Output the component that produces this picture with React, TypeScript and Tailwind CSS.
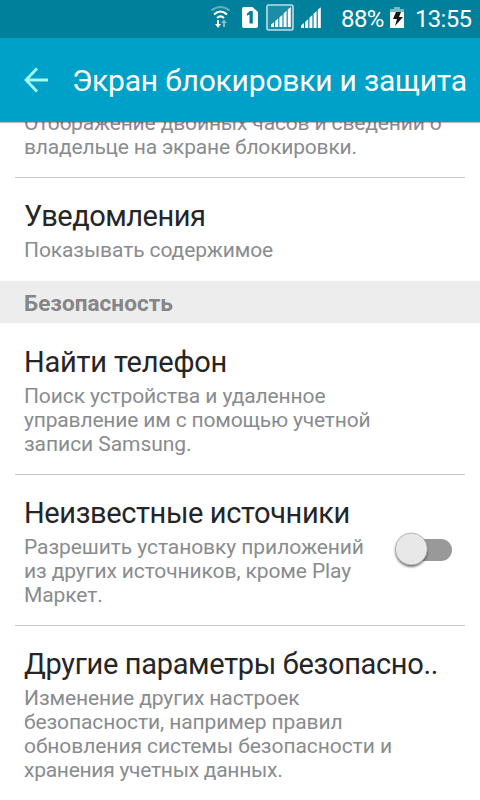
import React from "react";

type RowProps = {
  title: string;
  lines: string[];
  divider?: boolean;
  titleClass?: string;
  lineClasses?: string[];
  toggle?: boolean;
};

function Row({ title, lines, divider = true, titleClass = "", lineClasses = [], toggle = false }: RowProps) {
  return (
    <section className="relative px-[15px]">
      <div className={`h-px ${divider ? "bg-[#c9cacb]" : "bg-transparent"}`} />
      <div className="flex pt-[21px] pb-[18px] pl-[9px]">
        <div className="whitespace-nowrap">
          <h2 className={`h-[34px] text-[29px] leading-[34px] text-[#252525] ${titleClass}`}>{title}</h2>
          <div className="mt-[5px] text-[21px] leading-[24px] text-[#898c8e]">
            {lines.map((line, i) => (
              <p key={line} className={lineClasses[i] ?? "tracking-[-0.1px]"}>{line}</p>
            ))}
          </div>
        </div>
      </div>
      {toggle && (
        <button aria-label={title} className="absolute top-[57px] left-[390px] h-[40px] w-[68px]">
          <svg width="68" height="40" viewBox="0 0 68 40">
            <defs>
              <filter id="shade" x="-30%" y="-30%" width="160%" height="160%">
                <feDropShadow dx="0" dy="1.8" stdDeviation="1.1" floodColor="#000" floodOpacity="0.6" />
              </filter>
            </defs>
            <rect x="17" y="8" width="45" height="22" rx="11" fill="#999999" />
            <circle cx="21.3" cy="18" r="16" fill="#e8e8e8" filter="url(#shade)" />
            <circle cx="21.3" cy="18" r="16" fill="none" stroke="#8c8c8c" strokeWidth="0.6" />
          </svg>
        </button>
      )}
    </section>
  );
}

function StatusIcons() {
  return (
    <svg width="125" height="38" viewBox="0 0 125 38" className="shrink-0">
      <g fill="none" strokeWidth="2">
        <path d="M1.5 10.5Q10.5 3.5 19.5 10.5" stroke="#62b0c1" />
        <path d="M4 14.5Q10.5 8.5 17 14.5" stroke="#fff" />
        <path d="M7 18Q10.5 14.8 14 18" stroke="#fff" />
      </g>
      <path d="M7 20h2v4h2l-3 4-3-4h2z" fill="#fff" />
      <path d="M13 27h2v-4h2l-3-3.5-3 3.5h2z" fill="#7cbecb" />
      <path d="M34 7h8.5l5.5 5v14a2 2 0 0 1-2 2H34a2 2 0 0 1-2-2V9a2 2 0 0 1 2-2z" fill="#fff" />
      <path d="M37 13.5l3-2.5h2.8v12.5h-3.3V14.6L37 15.7z" fill="#00809a" />
      <rect x="57" y="5" width="26" height="25" rx="1.5" fill="#1c8da5" stroke="#b8e0e6" strokeWidth="1.6" />
      <g fill="#fff">
        <path d="M61 24.5l3-2.3V27h-3zM65.2 21l3-2.5V27h-3zM69.4 17.5l3-2.8V27h-3zM73.6 13.5l3-2.8V27h-3zM77.8 9.5l3-2.5v20h-3z" />
        <path d="M91 25.5l3-2.5v5h-3zM95.2 21.7l3-2.5V28h-3zM99.4 17.7l3-2.8V28h-3zM103.6 13.7l3-2.8V28h-3zM107.8 9.7l3-2.5V28h-3z" />
      </g>
    </svg>
  );
}

export default function App() {
  return (
    <main className="flex h-[800px] w-[480px] flex-col overflow-hidden bg-white font-['Roboto','Noto_Sans',sans-serif]">
      <div className="flex h-[38px] shrink-0 items-center bg-[#00809a] pl-[210px] text-[24px] leading-[38px] text-white">
        <StatusIcons />
        <span className="ml-[6px] w-[44px] whitespace-nowrap tracking-[-0.6px]">88%</span>
        <svg width="14" height="38" viewBox="0 0 14 38" className="ml-[5px] shrink-0">
          <path d="M4 7h6v2h4v4H0V9h4z" fill="#74bac8" />
          <path d="M0 12h14v16H0z" fill="#fff" />
          <path d="M6 12h5l-2 5h4l-8 9 2-7H3z" fill="#161616" />
        </svg>
        <span className="ml-[11px] whitespace-nowrap tracking-[-0.7px]">13:55</span>
      </div>
      <header className="relative z-10 flex h-[84px] shrink-0 items-center bg-[#00a1c9] pl-[24px] shadow-[0_1px_1px_rgba(0,0,0,0.25)]">
        <svg width="25" height="26" viewBox="0 0 25 26" fill="none" stroke="#a6fbef" strokeWidth="2.8">
          <path d="M13 1.5L2 13l11 11.5M2 13h22" />
        </svg>
        <h1 className="mt-[2px] ml-[23px] whitespace-nowrap text-[30px] leading-[36px] tracking-[-0.2px] text-white">Экран блокировки и защита</h1>
      </header>
      <div className="flex-1">
        <div className="-mt-[11px] h-[66px] whitespace-nowrap pl-[24px] text-[21px] leading-[24px] text-[#898c8e]">
          <p className="tracking-[-0.14px]">Отображение двойных часов и сведений о</p>
          <p className="tracking-[-0.19px]">владельце на экране блокировки.</p>
        </div>
        <Row title="Уведомления" titleClass="tracking-[-0.5px]" lines={["Показывать содержимое"]} />
        <h3 className="mt-px h-[42px] bg-[#ededed] pl-[24px] text-[22.5px] leading-[44px] font-bold tracking-[0.05px] text-[#868686]">Безопасность</h3>
        <Row
          title="Найти телефон"
          titleClass="tracking-[-0.2px]"
          divider={false}
          lines={["Поиск устройства и удаленное", "управление им с помощью учетной", "записи Samsung."]}
          lineClasses={["tracking-[-0.11px]", "tracking-[-0.17px]", "tracking-[-0.05px]"]}
        />
        <Row
          title="Неизвестные источники"
          titleClass="tracking-[-0.38px]"
          toggle
          lines={["Разрешить установку приложений", "из других источников, кроме Play", "Маркет."]}
          lineClasses={["tracking-[-0.07px]", "tracking-[-0.1px]", "tracking-[-0.1px]"]}
        />
        <Row
          title="Другие параметры безопасно.."
          titleClass="tracking-[-0.33px]"
          lines={["Изменение других настроек", "безопасности, например правил", "обновления системы безопасности и", "хранения учетных данных."]}
          lineClasses={["tracking-[-0.1px]", "tracking-[-0.1px]", "tracking-[-0.06px]", "tracking-[-0.27px]"]}
        />
      </div>
    </main>
  );
}
